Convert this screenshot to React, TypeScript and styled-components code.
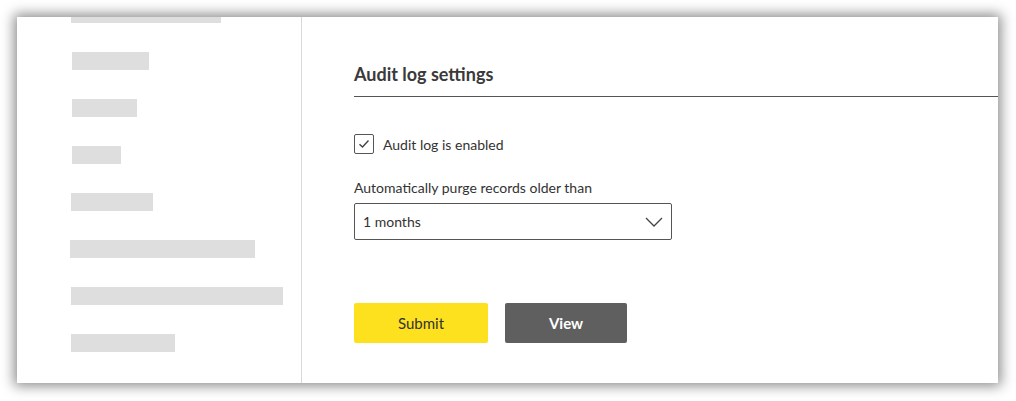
import React from "react";
import styled, { createGlobalStyle } from "styled-components";

const Global = createGlobalStyle`
  body { margin: 0; background: #fff; font-family: Lato, "Liberation Sans", sans-serif; color: #333; }
`;

const Page = styled.div`
  padding: 17px 18px 18px 17px;
  height: 401px;
  box-sizing: border-box;
`;

const Card = styled.div`
  display: flex;
  height: 366px;
  background: #fff;
  box-shadow: 0 0 12px 3px rgba(0,0,0,0.45);
  overflow: hidden;
`;

const Sidebar = styled.div`
  width: 285px;
  border-right: 1px solid #d9d9d9;
  display: flex;
  flex-direction: column;
  gap: 29px;
  padding-left: 54px;
  margin-top: -6px;
  box-sizing: border-box;
`;

const Bar = styled.div<{ w: number; dx?: number }>`
  width: ${p => p.w}px;
  height: 18px;
  margin-left: ${p => p.dx ?? 0}px;
  background: #dedede;
`;

const Main = styled.div`
  flex: 1;
  padding: 46px 0 0 52px;
`;

const Title = styled.h2`
  margin: 0;
  font-size: 18px;
  font-weight: 700;
  color: #3a3a3a;
  padding-bottom: 11px;
  border-bottom: 1px solid #555;
`;

const CheckRow = styled.label`
  display: flex;
  align-items: center;
  gap: 9px;
  margin-top: 37px;
  font-size: 14px;
  color: #333;
`;

const Box = styled.span`
  width: 18px;
  height: 18px;
  border: 1px solid #555;
  border-radius: 2px;
  display: flex;
  align-items: center;
  justify-content: center;
`;

const FieldLabel = styled.div`
  margin-top: 25px;
  font-size: 14px;
  color: #333;
`;

const Select = styled.div`
  margin-top: 7px;
  width: 318px;
  height: 37px;
  box-sizing: border-box;
  border: 1px solid #555;
  border-radius: 2px;
  display: flex;
  align-items: center;
  justify-content: space-between;
  padding: 0 8px 0 8px;
  font-size: 14px;
`;

const Buttons = styled.div`
  display: flex;
  gap: 17px;
  margin-top: 63px;
`;

const Btn = styled.button<{ primary?: boolean; w: number }>`
  width: ${p => p.w}px;
  height: 40px;
  border: none;
  border-radius: 2px;
  font-family: Lato, "Liberation Sans", sans-serif;
  font-size: 15px;
  font-weight: ${p => (p.primary ? 400 : 700)};
  background: ${p => (p.primary ? "#fde11e" : "#5f5f5f")};
  color: ${p => (p.primary ? "#333" : "#fff")};
`;

export default function App() {
  return (
    <Page>
      <Global />
      <Card>
        <Sidebar>
          <Bar w={150} dx={0} style={{ height: 12 }} />
          <Bar w={77} dx={1} />
          <Bar w={65} dx={1} />
          <Bar w={49} dx={1} />
          <Bar w={82} />
          <Bar w={185} dx={-1} />
          <Bar w={212} />
          <Bar w={104} />
        </Sidebar>
        <Main>
          <Title>Audit log settings</Title>
          <CheckRow>
            <Box>
              <svg width="12" height="10" viewBox="0 0 12 10">
                <path d="M1.5 5.2 L4.5 8 L10.5 1.5" fill="none" stroke="#444" strokeWidth="1.4" />
              </svg>
            </Box>
            Audit log is enabled
          </CheckRow>
          <FieldLabel>Automatically purge records older than</FieldLabel>
          <Select>
            <span>1 months</span>
            <svg width="18" height="10" viewBox="0 0 18 10">
              <path d="M1 1 L9 9 L17 1" fill="none" stroke="#444" strokeWidth="1.3" />
            </svg>
          </Select>
          <Buttons>
            <Btn primary w={134}>Submit</Btn>
            <Btn w={122}>View</Btn>
          </Buttons>
        </Main>
      </Card>
    </Page>
  );
}
